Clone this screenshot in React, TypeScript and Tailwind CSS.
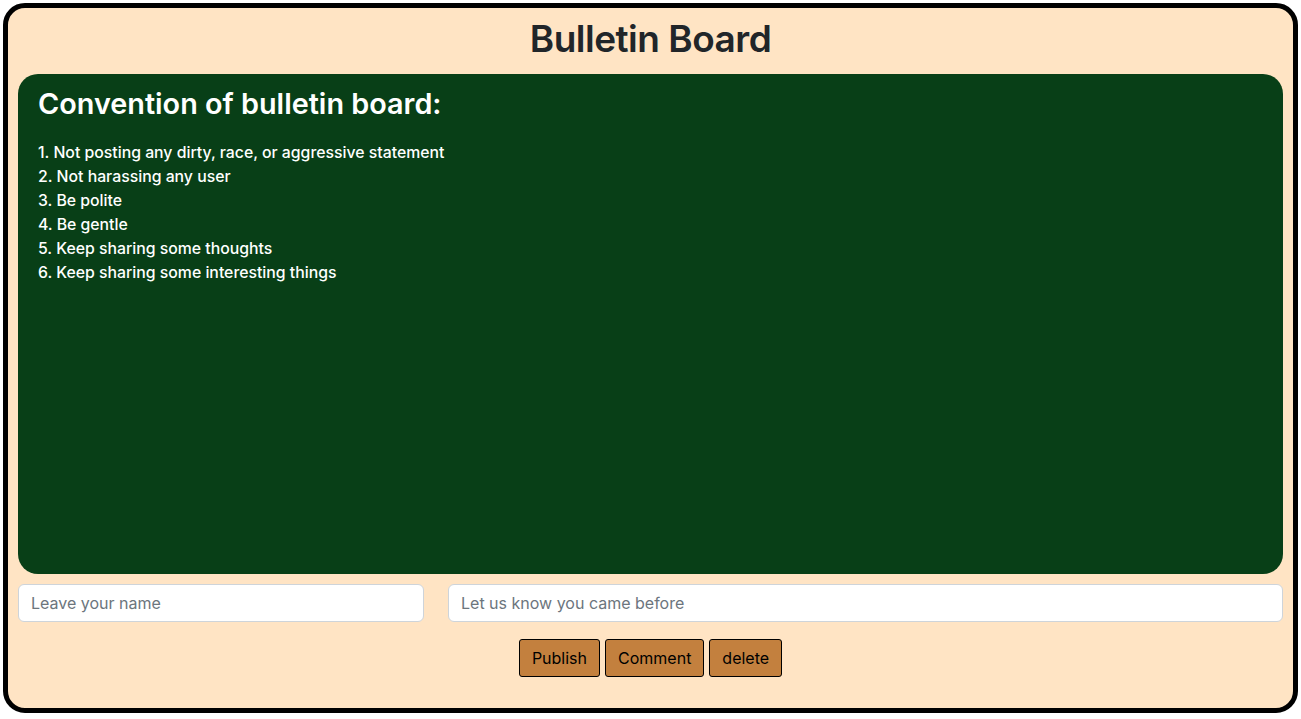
const rules = [
  '1. Not posting any dirty, race, or aggressive statement',
  '2. Not harassing any user',
  '3. Be polite',
  '4. Be gentle',
  '5. Keep sharing some thoughts',
  '6. Keep sharing some interesting things',
]

export default function App() {
  return (
    <div className="p-[3px] font-['Inter',sans-serif]">
      <div className="h-[710px] border-[5px] border-black rounded-[22px] bg-[#ffe4c4] px-[10px] flex flex-col">
        <h1 className="h-[66px] pt-[7px] text-center text-[37px] leading-[48px] font-semibold text-[#212529] tracking-[-0.5px]">
          Bulletin Board
        </h1>

        <div className="h-[500px] bg-[#083f17] rounded-[20px] px-[20px] pt-[13px] text-white">
          <h3 className="text-[28.8px] leading-[34px] font-semibold mb-[20px]">
            Convention of bulletin board:
          </h3>
          <div className="text-[15.8px] leading-[24px] font-medium">
            {rules.map((r) => (
              <p key={r}>{r}</p>
            ))}
          </div>
        </div>

        <div className="flex gap-[24px] mt-[10px]">
          <input
            placeholder="Leave your name"
            className="w-[406px] h-[38px] bg-white border border-[#ced4da] rounded-[6px] px-[12px] text-[16px] text-[#212529] placeholder:text-[#6c757d] outline-none"
          />
          <input
            placeholder="Let us know you came before"
            className="flex-1 h-[38px] bg-white border border-[#ced4da] rounded-[6px] px-[12px] text-[16px] text-[#212529] placeholder:text-[#6c757d] outline-none"
          />
        </div>

        <div className="flex justify-center gap-[5px] mt-[17px]">
          <button className="h-[38px] px-[12px] bg-[#c3803e] border border-black rounded-[3px] text-[16px] text-black">
            Publish
          </button>
          <button className="h-[38px] px-[12px] bg-[#c3803e] border border-black rounded-[3px] text-[16px] text-black">
            Comment
          </button>
          <button className="h-[38px] px-[12px] bg-[#c3803e] border border-black rounded-[3px] text-[16px] text-black">
            delete
          </button>
        </div>
      </div>
    </div>
  )
}
